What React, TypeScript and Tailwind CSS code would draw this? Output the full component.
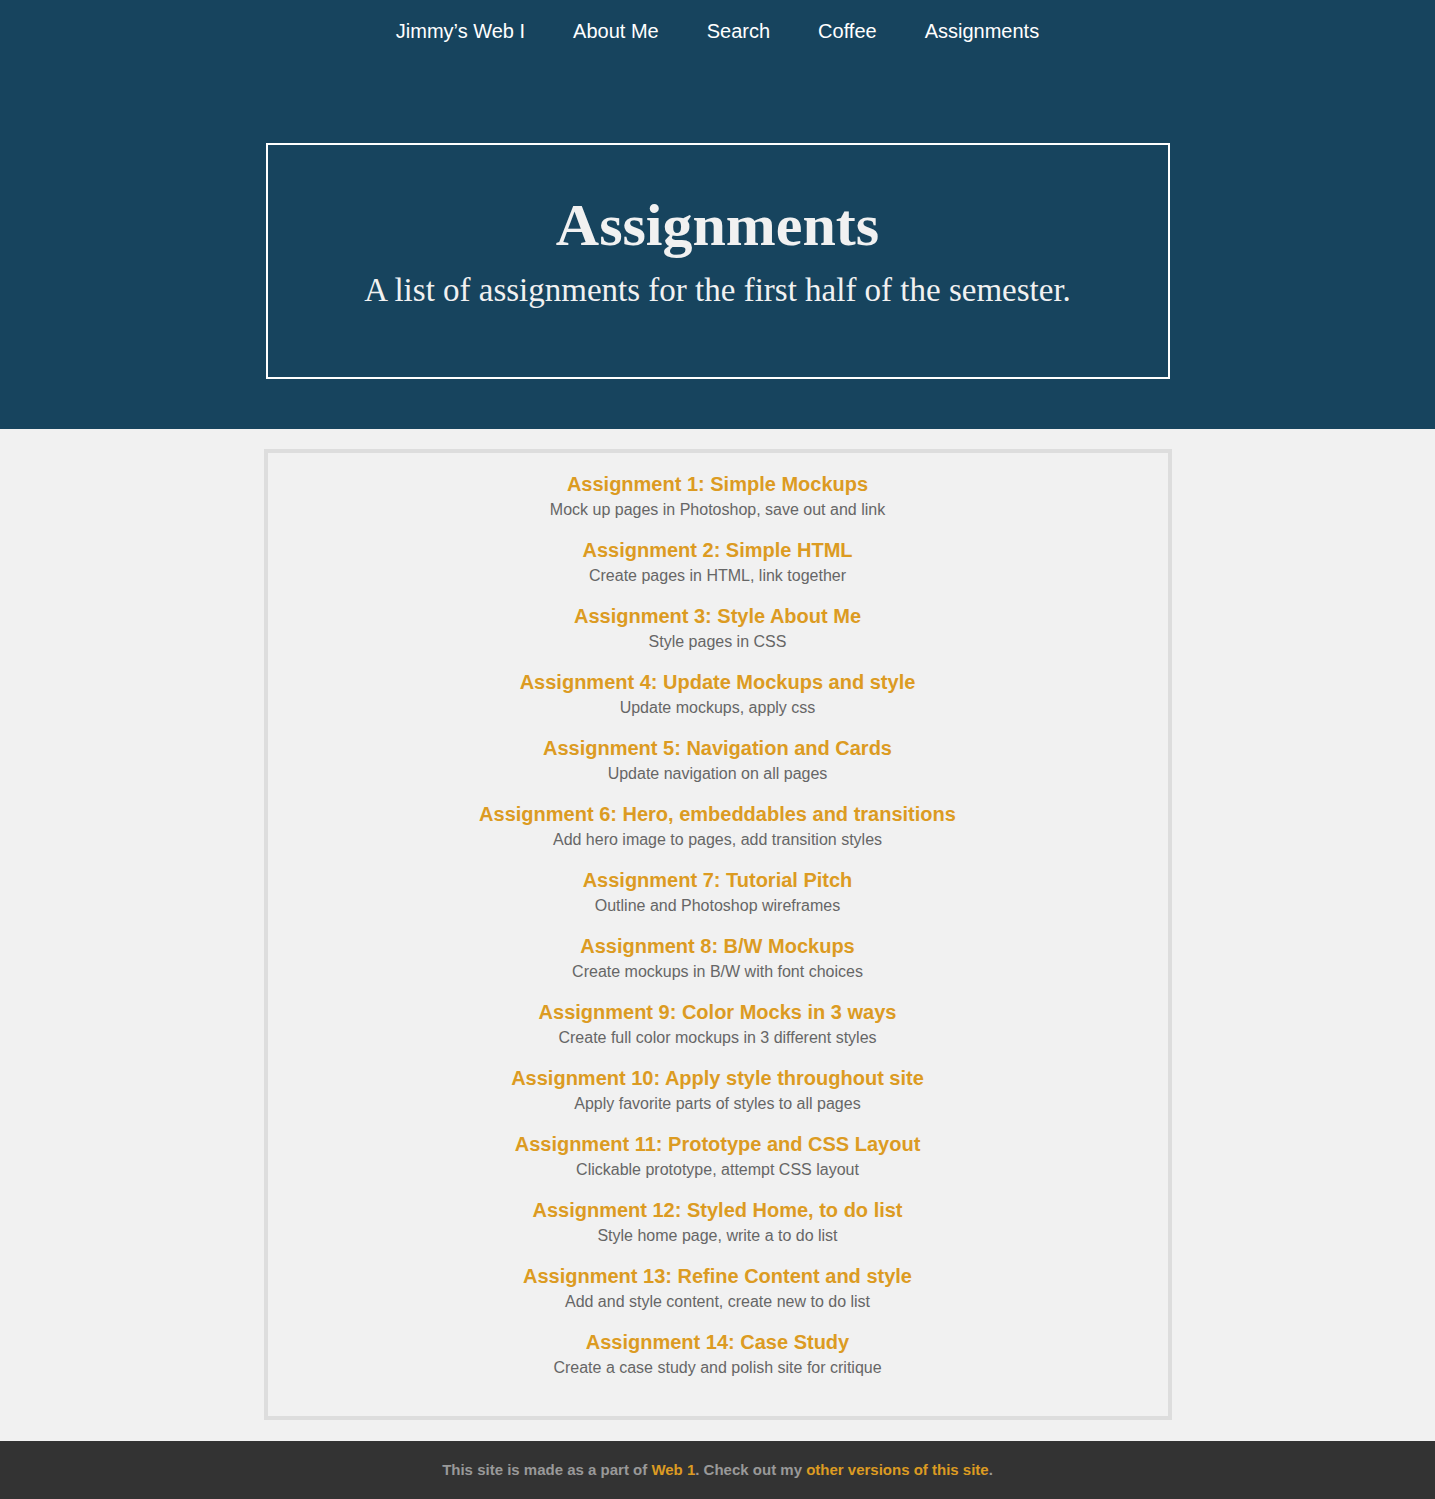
const navLinks = ['Jimmy’s Web I', 'About Me', 'Search', 'Coffee', 'Assignments'];

const assignments = [
  { title: 'Assignment 1: Simple Mockups', desc: 'Mock up pages in Photoshop, save out and link' },
  { title: 'Assignment 2: Simple HTML', desc: 'Create pages in HTML, link together' },
  { title: 'Assignment 3: Style About Me', desc: 'Style pages in CSS' },
  { title: 'Assignment 4: Update Mockups and style', desc: 'Update mockups, apply css' },
  { title: 'Assignment 5: Navigation and Cards', desc: 'Update navigation on all pages' },
  { title: 'Assignment 6: Hero, embeddables and transitions', desc: 'Add hero image to pages, add transition styles' },
  { title: 'Assignment 7: Tutorial Pitch', desc: 'Outline and Photoshop wireframes' },
  { title: 'Assignment 8: B/W Mockups', desc: 'Create mockups in B/W with font choices' },
  { title: 'Assignment 9: Color Mocks in 3 ways', desc: 'Create full color mockups in 3 different styles' },
  { title: 'Assignment 10: Apply style throughout site', desc: 'Apply favorite parts of styles to all pages' },
  { title: 'Assignment 11: Prototype and CSS Layout', desc: 'Clickable prototype, attempt CSS layout' },
  { title: 'Assignment 12: Styled Home, to do list', desc: 'Style home page, write a to do list' },
  { title: 'Assignment 13: Refine Content and style', desc: 'Add and style content, create new to do list' },
  { title: 'Assignment 14: Case Study', desc: 'Create a case study and polish site for critique' },
];

export default function App() {
  return (
    <div className="min-h-screen bg-[#f1f1f1] font-['Liberation_Sans',Arial,sans-serif]">
      <header className="bg-[#17445e] h-[429px] flex flex-col items-center">
        <nav className="flex justify-center pt-[18px] h-[143px]">
          {navLinks.map((link) => (
            <a key={link} href="#" className="px-6 text-[20px] leading-[26px] text-white">
              {link}
            </a>
          ))}
        </nav>
        <div className="w-[904px] h-[236px] border-2 border-white flex flex-col items-center pt-[50px] font-['Liberation_Serif','DejaVu_Serif',Georgia,serif] text-[#f1f1f1]">
          <h1 className="text-[60px] leading-[60px] font-bold">Assignments</h1>
          <p className="mt-[15px] text-[33px] leading-[40px]">
            A list of assignments for the first half of the semester.
          </p>
        </div>
      </header>

      <main className="pt-5 pb-5 flex justify-center">
        <div className="w-[908px] border-4 border-[#dddddd] pt-[18px] pb-[21px] flex flex-col items-center text-center">
          {assignments.map((a) => (
            <div key={a.title} className="mb-[16px]">
              <a href="#" className="block text-[20px] leading-[26px] font-bold text-[#dc9b22]">
                {a.title}
              </a>
              <p className="mt-[2px] text-[16px] leading-[22px] text-[#666666]">{a.desc}</p>
            </div>
          ))}
        </div>
      </main>

      <footer className="mt-px bg-[#333333] h-[58px] flex items-center justify-center text-[15px] font-bold text-[#999999]">
        <p className="pt-px">
          This site is made as a part of <a href="#" className="text-[#dc9b22]">Web 1</a>. Check out my{' '}
          <a href="#" className="text-[#dc9b22]">other versions of this site</a>.
        </p>
      </footer>
    </div>
  );
}
